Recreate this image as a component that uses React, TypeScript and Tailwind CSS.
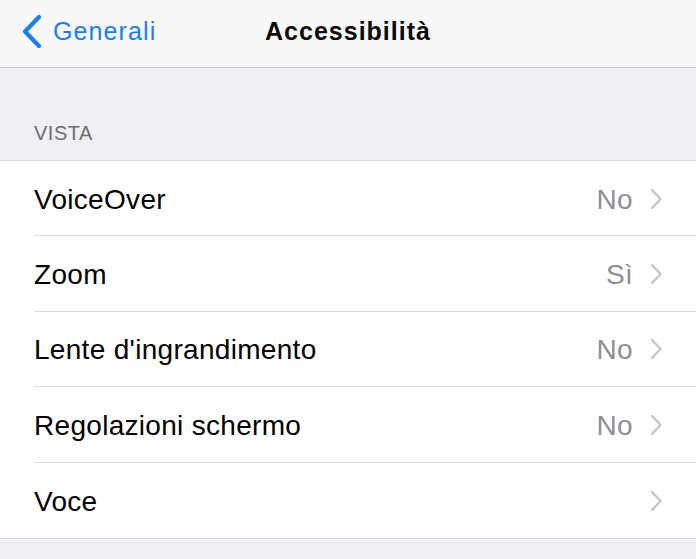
import { ChevronRight } from 'lucide-react';

const rows = [
  { label: 'VoiceOver', value: 'No' },
  { label: 'Zoom', value: 'Sì' },
  { label: "Lente d'ingrandimento", value: 'No' },
  { label: 'Regolazioni schermo', value: 'No' },
  { label: 'Voce', value: '' },
];

export default function App() {
  return (
    <div className="w-[696px] h-[559px] overflow-hidden bg-[#efeff4] font-['Liberation_Sans',Arial,sans-serif]">
      {/* Nav bar */}
      <div className="relative h-[68px] bg-[#f8f8f8] border-b border-[#c4c4c9] flex items-center">
        <div className="flex items-center pl-[20px] text-[#1a7ff0]">
          <svg width="24" height="36" viewBox="0 0 24 36" className="mt-[-3px]">
            <path d="M19 3 L5 17.5 L19 32" fill="none" stroke="#1a7ff0" strokeWidth="4.2" strokeLinecap="round" strokeLinejoin="round" />
          </svg>
          <span className="ml-[9px] text-[25px] tracking-[1.1px] mt-[-4px]">Generali</span>
        </div>
        <div className="absolute left-0 right-0 top-0 h-[64px] flex items-center justify-center pointer-events-none">
          <span className="text-[25px] font-bold tracking-[1px] text-[#0a0a0a]">Accessibilità</span>
        </div>
      </div>

      {/* Section header */}
      <div className="h-[92px] flex items-end pl-[34px] pb-[12px]">
        <span className="text-[20px] tracking-[0.5px] text-[#6d6d72]">VISTA</span>
      </div>

      {/* List */}
      <div className="bg-white border-t border-b border-[#d6d6da]">
        {rows.map((r, i) => (
          <div key={r.label} className="pl-[34px]">
            <div
              className={`h-[75.4px] flex items-center pr-[33px] ${i < rows.length - 1 ? 'border-b border-[#dcdcdf]' : ''}`}
            >
              <span className="flex-1 text-[28px] tracking-[0.3px] text-black pt-[3px]">{r.label}</span>
              {r.value && <span className="text-[28px] tracking-[0.3px] text-[#8e8e93] mr-[16px] pt-[3px]">{r.value}</span>}
              <svg width="14" height="22" viewBox="0 0 14 22" className="mt-[1px]">
                <path d="M3 2 L11.5 11 L3 20" fill="none" stroke="#c4c4c8" strokeWidth="2.4" strokeLinecap="round" strokeLinejoin="round" />
              </svg>
            </div>
          </div>
        ))}
      </div>
    </div>
  );
}
